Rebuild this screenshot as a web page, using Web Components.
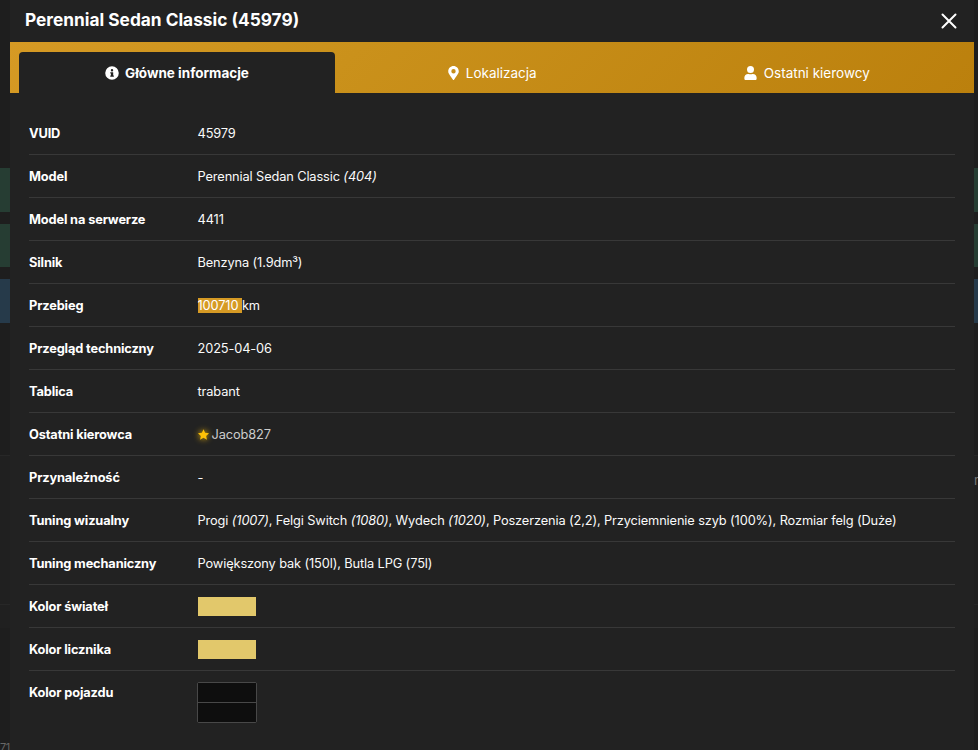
<!DOCTYPE html>
<html lang="pl">
<head>
<meta charset="utf-8">
<title>Perennial Sedan Classic (45979)</title>
<style>
  html, body{
    height: 100%;
    margin: 0;
    overflow: hidden;
  }

  body{
    background-color: #1e1e1e;
    color: #fafafa;
    display: grid;
    font-family: Inter, sans-serif;
    font-size: 12.8px;
    grid-template-columns: 10px 964px 4px;
    height: 750px;
  }
</style>
</head>
<body>
  <page-edge side="left">71</page-edge>
  <vehicle-modal>
    <span slot="title">Perennial Sedan Classic (45979)</span>
    <tab-bar slot="tabs">
      <tab-item icon="info" active>Główne informacje</tab-item>
      <tab-item icon="pin">Lokalizacja</tab-item>
      <tab-item icon="user">Ostatni kierowcy</tab-item>
    </tab-bar>
    <info-row label="VUID">45979</info-row>
    <info-row label="Model">Perennial Sedan Classic <i>(404)</i></info-row>
    <info-row label="Model na serwerze">4411</info-row>
    <info-row label="Silnik">Benzyna (1.9dm³)</info-row>
    <info-row label="Przebieg"><marked-text>100710 </marked-text>km</info-row>
    <info-row label="Przegląd techniczny">2025-04-06</info-row>
    <info-row label="Tablica">trabant</info-row>
    <info-row label="Ostatni kierowca"><player-name>Jacob827</player-name></info-row>
    <info-row label="Przynależność">-</info-row>
    <info-row label="Tuning wizualny">Progi <i>(1007)</i>, Felgi Switch <i>(1080)</i>, Wydech <i>(1020)</i>, Poszerzenia (2,2), Przyciemnienie szyb (100%), Rozmiar felg (Duże)</info-row>
    <info-row label="Tuning mechaniczny">Powiększony bak (150l), Butla LPG (75l)</info-row>
    <info-row label="Kolor świateł"><color-swatch color="#e2c86b"></color-swatch></info-row>
    <info-row label="Kolor licznika"><color-swatch color="#e2c86b"></color-swatch></info-row>
    <info-row label="Kolor pojazdu" last><color-swatch color="#0e0e0e" double></color-swatch></info-row>
  </vehicle-modal>
  <page-edge side="right">r</page-edge>

<script>
const icons = {
  info: '<svg width="14" height="14" viewBox="0 0 512 512"><path fill-rule="evenodd" d="M256 8a248 248 0 1 0 0 496a248 248 0 1 0 0-496zM256 112a44 44 0 1 1 0 88a44 44 0 1 1 0-88zM204 224h84c7 0 12 5 12 12v108h12c7 0 12 5 12 12v24c0 7-5 12-12 12H204c-7 0-12-5-12-12v-24c0-7 5-12 12-12h12v-72h-12c-7 0-12-5-12-12v-24c0-7 5-12 12-12z"/></svg>',
  pin: '<svg width="11" height="14" viewBox="0 0 384 512"><path d="M172.300 501.700C27 291 0 269.400 0 192 0 86 86 0 192 0s192 86 192 192c0 77.400-27 99-172.300 309.700-9.500 13.800-29.900 13.800-39.400 0zM192 272a80 80 0 1 0 0-160 80 80 0 0 0 0 160z"/></svg>',
  user: '<svg width="13" height="14" viewBox="0 0 448 512"><path d="M224 256a128 128 0 1 0 0-256 128 128 0 1 0 0 256zm90 32h-17c-46 21-100 21-146 0h-17C60 288 0 348 0 422v42c0 27 21 48 48 48h352c27 0 48-21 48-48v-42c0-74-60-134-134-134z"/></svg>'
}

class VehicleModal extends HTMLElement {
  constructor () {
    super()
    this.shadow = this.attachShadow({ mode: 'open' })
  }

  connectedCallback () {
    this.render()
  }

  render () {
    this.shadow.innerHTML =
    /* html */`
    <style>
      :host{
        background-color: #222;
        display: flex;
        flex-direction: column;
        min-width: 0;
      }

      header{
        align-items: center;
        box-sizing: border-box;
        color: white;
        display: flex;
        height: 42px;
        justify-content: space-between;
        padding: 0 17px 3px 15px;
      }

      h2{
        font-size: 17.300px;
        font-weight: 700;
        margin: -1px 0 0;
      }

      header svg{
        display: block;
        margin-top: 2px;
      }

      .content{
        padding: 19px 19px 0;
      }
    </style>

    <header>
      <h2><slot name="title"></slot></h2>
      <svg width="16" height="16" viewBox="0 0 16 16" fill="none" stroke="white" stroke-width="2" stroke-linecap="round"><path d="M1.500 1.500l13 13M14.500 1.500l-13 13"/></svg>
    </header>
    <slot name="tabs"></slot>
    <div class="content"><slot></slot></div>
    `
  }
}

class TabBar extends HTMLElement {
  constructor () {
    super()
    this.shadow = this.attachShadow({ mode: 'open' })
  }

  connectedCallback () {
    this.shadow.innerHTML =
    /* html */`
    <style>
      :host{
        background: linear-gradient(135deg, #d69a24, #ca911b 35%, #bb800d);
        box-sizing: border-box;
        display: grid;
        grid-template-columns: 316px 1fr 1fr;
        height: 51px;
        padding: 10px 10px 0 9px;
      }
    </style>
    <slot></slot>
    `
  }
}

class TabItem extends HTMLElement {
  constructor () {
    super()
    this.shadow = this.attachShadow({ mode: 'open' })
  }

  connectedCallback () {
    this.shadow.innerHTML =
    /* html */`
    <style>
      :host{
        align-items: center;
        border-radius: 4px 4px 0 0;
        color: white;
        display: flex;
        font-size: 13.500px;
        gap: 7px;
        justify-content: center;
        padding-top: 1px;
      }

      :host([active]){
        background-color: #222;
        font-weight: 700;
        gap: 6px;
      }

      svg{
        fill: white;
      }
    </style>
    ${icons[this.getAttribute('icon')]}
    <span><slot></slot></span>
    `
  }
}

class InfoRow extends HTMLElement {
  constructor () {
    super()
    this.shadow = this.attachShadow({ mode: 'open' })
  }

  connectedCallback () {
    this.shadow.innerHTML =
    /* html */`
    <style>
      :host{
        border-bottom: 1px solid #383838;
        display: grid;
        grid-template-columns: 168.500px 1fr;
        line-height: 20px;
        padding: 12px 0 10px;
        white-space: nowrap;
      }

      :host([last]){
        border-bottom: none;
      }

      .label{
        color: white;
        font-weight: 700;
        letter-spacing: -0.140px;
      }

      .value{
        letter-spacing: -0.120px;
      }
    </style>
    <div class="label">${this.getAttribute('label')}</div>
    <div class="value"><slot></slot></div>
    `
  }
}

class MarkedText extends HTMLElement {
  constructor () {
    super()
    this.shadow = this.attachShadow({ mode: 'open' })
  }

  connectedCallback () {
    this.shadow.innerHTML =
    /* html */`
    <style>
      :host{
        background-color: #d69a24;
        color: white;
      }
    </style>
    <slot></slot>
    `.trim()
  }
}

class PlayerName extends HTMLElement {
  constructor () {
    super()
    this.shadow = this.attachShadow({ mode: 'open' })
  }

  connectedCallback () {
    this.shadow.innerHTML =
    /* html */`
    <style>
      :host{
        align-items: center;
        color: #ccc;
        display: flex;
        gap: 3px;
      }

      svg{
        fill: #ffc107;
        filter: drop-shadow(0 0 3px #ffc107);
        margin-top: -2px;
        overflow: visible;
      }
    </style>
    <svg width="11" height="11" viewBox="0 0 24 24"><path d="M12 0.500l3.600 7.700 8.400 1-6.200 5.800 1.700 8.400L12 19.200l-7.500 4.200 1.700-8.400L0 9.200l8.400-1z"/></svg>
    <slot></slot>
    `
  }
}

class ColorSwatch extends HTMLElement {
  constructor () {
    super()
    this.shadow = this.attachShadow({ mode: 'open' })
  }

  connectedCallback () {
    const color = this.getAttribute('color')
    this.shadow.innerHTML =
    /* html */`
    <style>
      :host{
        display: block;
        width: 58px;
      }

      :host([double]){
        border: 1px solid #484848;
        border-radius: 2px;
        margin-left: -1px;
        margin-top: -1px;
      }

      .color{
        height: 19px;
      }

      .color + .color{
        border-top: 1px solid #484848;
      }
    </style>
    <div class="color" style="background-color: ${color}"></div>
    ${this.hasAttribute('double') ? `<div class="color" style="background-color: ${color}"></div>` : ''}
    `
  }
}

// dimmed strip of the page behind the modal
class PageEdge extends HTMLElement {
  constructor () {
    super()
    this.shadow = this.attachShadow({ mode: 'open' })
  }

  connectedCallback () {
    this.shadow.innerHTML =
    /* html */`
    <style>
      :host{
        box-sizing: border-box;
        color: #666;
        display: flex;
        flex-direction: column;
        font-size: 11px;
        height: 750px;
        line-height: 14px;
        overflow: hidden;
        padding-top: 168px;
      }

      .alert{
        background-color: #263d33;
        flex: none;
        height: 44px;
        margin-bottom: 12px;
      }

      .alert.second{
        height: 43px;
      }

      .alert.blue{
        background-color: #263a4a;
        margin-bottom: 0;
      }

      .panel{
        background-color: #202020;
        border-top: 1px solid #272727;
        box-sizing: border-box;
        flex: none;
        height: 149px;
        margin-top: 132px;
      }

      .panel.low{
        height: 24px;
        margin-top: 0;
      }

      .text{
        letter-spacing: -0.500px;
        margin-top: 112px;
      }

      :host([side="right"]) .text{
        color: #777;
        margin-top: -155px;
        font-size: 13px;
      }
    </style>
    <div class="alert"></div>
    <div class="alert second"></div>
    <div class="alert blue"></div>
    <div class="panel"></div>
    <div class="panel low"></div>
    <div class="text"><slot></slot></div>
    `
  }
}

customElements.define('vehicle-modal', VehicleModal)
customElements.define('tab-bar', TabBar)
customElements.define('tab-item', TabItem)
customElements.define('info-row', InfoRow)
customElements.define('marked-text', MarkedText)
customElements.define('player-name', PlayerName)
customElements.define('color-swatch', ColorSwatch)
customElements.define('page-edge', PageEdge)
</script>
</body>
</html>
